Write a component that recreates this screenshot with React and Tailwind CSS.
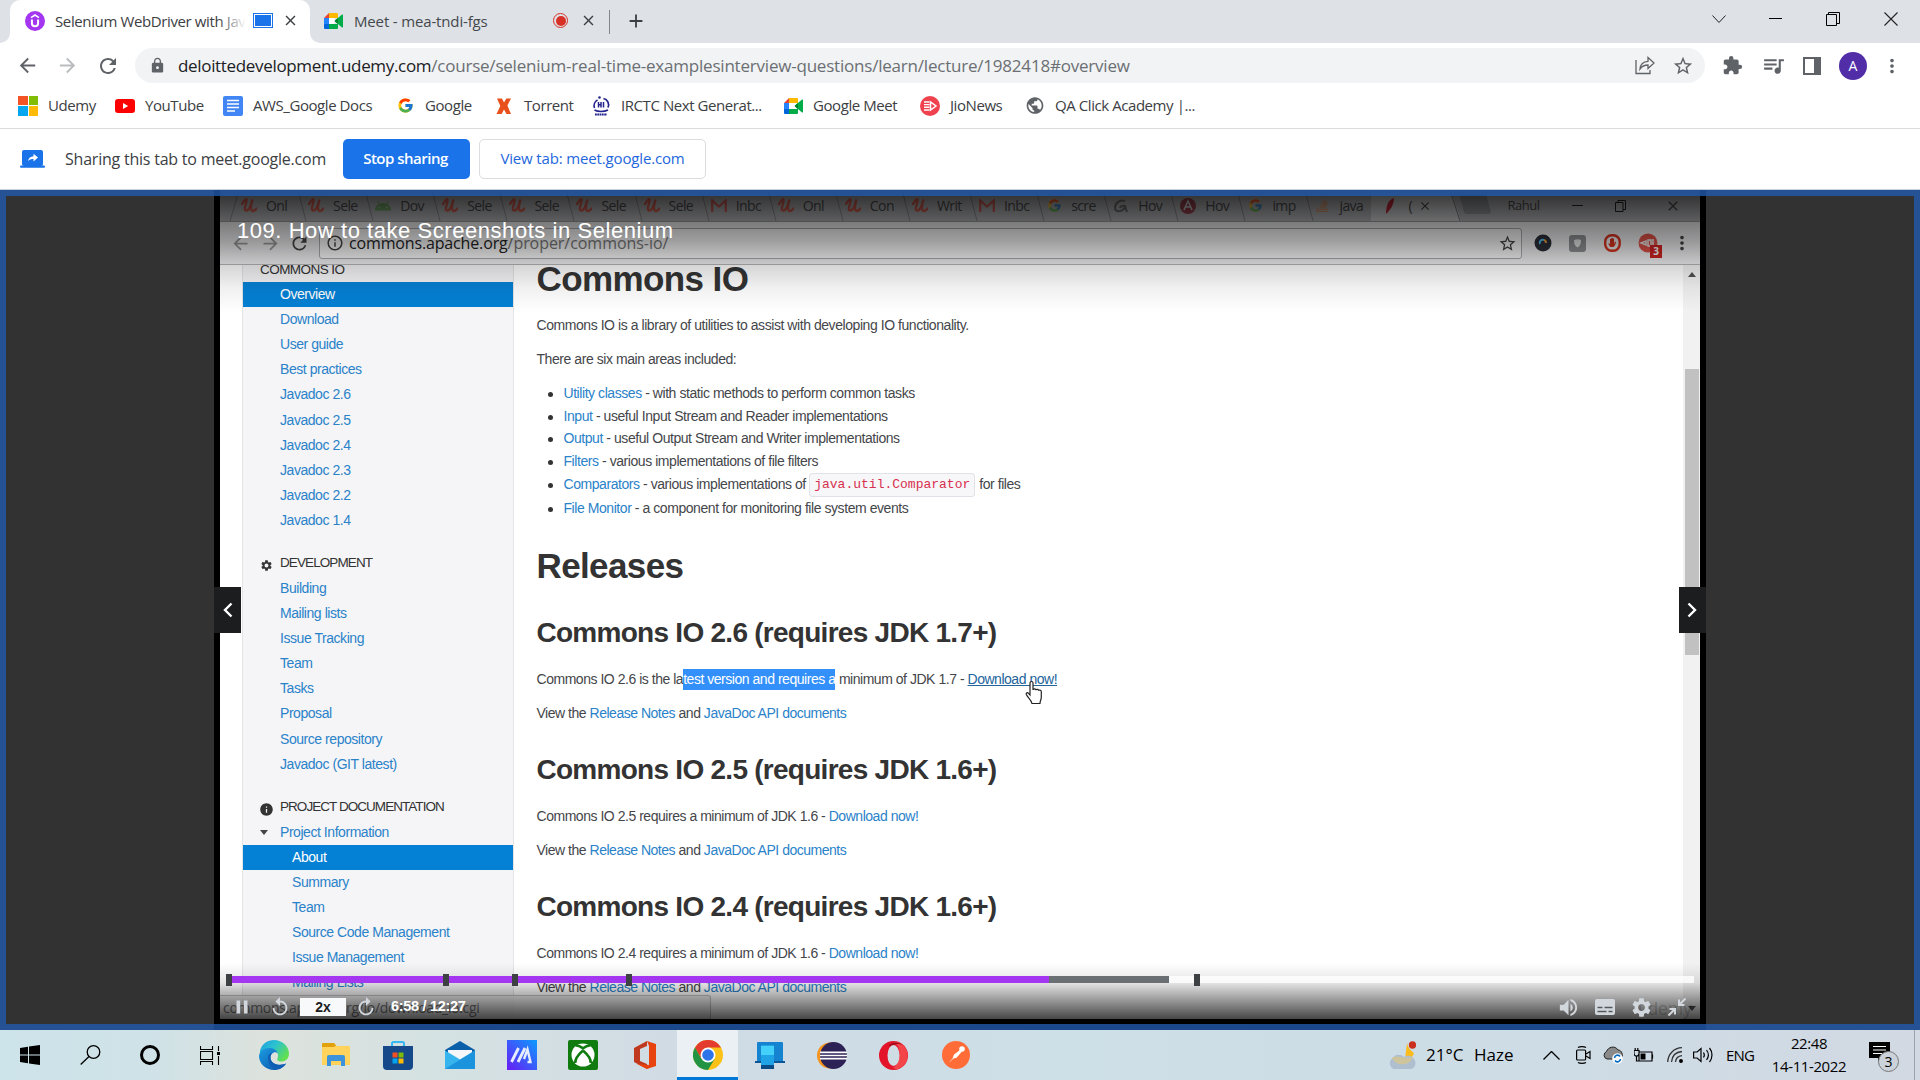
import React from "react";
import {
  MdArrowBack, MdArrowForward, MdRefresh, MdLock, MdStarBorder, MdExtension, MdQueueMusic,
  MdMoreVert, MdAdd, MdClose, MdSettings, MdVolumeUp, MdReplay, MdPause, MdPublic, MdInfo,
  MdInfoOutline, MdAndroid,
} from "react-icons/md";
import { FcGoogle } from "react-icons/fc";
import { FaStackOverflow } from "react-icons/fa";

/* ---------- small brand drawings ---------- */

function UdemyIcon() {
  return (
    <svg width="20" height="20" viewBox="0 0 20 20">
      <circle cx="10" cy="10" r="10" fill="#a435f0" />
      <path d="M6 6.600 10 4l4 2.600" fill="none" stroke="#fff" strokeWidth="1.500" />
      <path d="M6.900 8.400v3.800a3.100 3.100 0 0 0 6.200 0V8.400" fill="none" stroke="#fff" strokeWidth="2" />
    </svg>
  );
}
function MeetIcon() {
  return (
    <svg width="19" height="16" viewBox="0 0 19 16">
      <path d="M5 0h8a1 1 0 0 1 1 1v4H5z" fill="#ffba00" />
      <path d="M5 0v5H0z" fill="#ea4335" />
      <path d="M0 5h5v6H0z" fill="#2684fc" />
      <path d="M0 11h5v5H1a1 1 0 0 1-1-1z" fill="#0066da" />
      <path d="M5 11h9v4a1 1 0 0 1-1 1H5z" fill="#00ac47" />
      <path d="M10.500 8 18 1.600c.4-.3 1-.1 1 .4v12c0 .5-.6.700-1 .4z" fill="#00ac47" />
      <path d="M14 5v6l-3.500-3z" fill="#00832d" />
      <path d="M5 5h5.500v6H5z" fill="#fff" />
    </svg>
  );
}
function MicrosoftIcon() {
  return (
    <div className="grid h-5 w-5 grid-cols-2 gap-px">
      <div className="bg-[#f35325]" />
      <div className="bg-[#81bc06]" />
      <div className="bg-[#05a6f0]" />
      <div className="bg-[#ffba08]" />
    </div>
  );
}
function YouTubeIcon() {
  return (
    <svg width="20" height="14" viewBox="0 0 20 14">
      <rect width="20" height="14" rx="3" fill="#f00" />
      <path d="M8 4v6l5.200-3z" fill="#fff" />
    </svg>
  );
}
function DocsIcon() {
  return (
    <svg width="20" height="20" viewBox="0 0 20 20">
      <rect width="20" height="20" rx="2" fill="#4285f4" />
      <path d="M4 4.500h12M4 8h12M4 11.500h12M4 15h8" stroke="#fff" strokeWidth="1.600" />
    </svg>
  );
}
function TorrentIcon() {
  return (
    <svg width="16" height="16" viewBox="0 0 16 16">
      <path d="M1 .5h5l2 4 2.300-4H15l-3.600 7L15 16h-4.500L8 11.500 5.700 16H.5l3.800-8z" fill="#e8511c" />
    </svg>
  );
}
function IrctcIcon() {
  return (
    <svg width="20" height="20" viewBox="0 0 20 20">
      <path d="M3.500 12A6.500 6.500 0 0 1 6.500 4M12.500 2.500a6.500 6.500 0 0 1 4.500 9M3.500 14c3.500 2 9.500 2 13.500 0" fill="none" stroke="#23238e" strokeWidth="1.700" />
      <path d="M7.500 6v5.500M10 6v5.500M12.500 6v5.500M7.500 8.700H10" stroke="#23238e" strokeWidth="1.500" />
      <path d="M4 18.500h12" stroke="#23238e" strokeWidth="2" strokeDasharray="1.800 .5" />
      <circle cx="8.500" cy="1.500" r="1.300" fill="#23238e" />
    </svg>
  );
}
function JioIcon() {
  return (
    <svg width="20" height="20" viewBox="0 0 20 20">
      <circle cx="10" cy="10" r="10" fill="#f0414f" />
      <path d="M4 6h5.500M4 8.600h5.500M4 11.300h5.500M4 14h5.500" stroke="#fff" strokeWidth="1.400" />
      <path d="M10.500 6v8l5.500-4z" fill="none" stroke="#fff" strokeWidth="1.500" />
    </svg>
  );
}
function ShareTabIcon() {
  return (
    <svg width="25" height="18" viewBox="0 0 25 18">
      <rect x="2" y="0" width="21" height="16" rx="2" fill="#1a73e8" />
      <rect x="0" y="15.500" width="25" height="2.200" rx="1" fill="#1a73e8" />
      <path d="M8 11c.6-3 2.600-4.600 5.500-4.800V3.800L18 7.600l-4.500 3.900V9c-2.300 0-4 .6-5.500 2z" fill="#fff" />
    </svg>
  );
}

/* ---------- browser chrome ---------- */

const UI = "font-['Open_Sans','Noto_Sans',sans-serif]";

function TabStrip() {
  return (
    <div className="flex h-[43px] items-end bg-[#dee1e6]">
      <div className="flex w-[10px] justify-end self-stretch">
        <div className="h-[10px] w-[10px] self-end bg-white"><div className="h-full w-full rounded-br-[10px] bg-[#dee1e6]" /></div>
      </div>
      <div className="flex h-[43px] w-[300px] items-center rounded-t-[10px] bg-white pb-[2px] pl-[15px]">
        <UdemyIcon />
        <div className="relative ml-[10px] w-[191px] overflow-hidden text-[15px] leading-5 tracking-[-0.38px] whitespace-nowrap text-[#3c4043]">
          Selenium WebDriver with Jav
          <div className="absolute inset-y-0 right-0 w-7 bg-linear-to-r from-white/0 to-white" />
        </div>
        <div className="ml-[7px] h-[15px] w-5 border border-[#1a73e8] p-px"><div className="h-full w-full bg-[#1a73e8]" /></div>
        <MdClose className="ml-[9px] text-[17px] text-[#3c4043]" />
      </div>
      <div className="h-[10px] w-[10px] bg-white"><div className="h-full w-full rounded-bl-[10px] bg-[#dee1e6]" /></div>
      <div className="flex h-[43px] w-[289px] items-center pb-[2px] pl-[4px]">
        <MeetIcon />
        <div className="ml-[11px] w-[199px] text-[15px] leading-5 tracking-[-0.15px] text-[#45494d]">Meet - mea-tndi-fgs</div>
        <div className="flex h-[15px] w-[15px] items-center justify-center rounded-full border border-[#d93025]"><div className="h-[10px] w-[10px] rounded-full bg-[#d93025]" /></div>
        <MdClose className="ml-[12px] text-[17px] text-[#3c4043]" />
      </div>
      <div className="mb-[9px] h-6 w-px bg-[#80868b]" />
      <MdAdd className="mb-[11px] ml-[15px] text-[22px] text-[#3c4043]" />
      <div className="ml-auto flex h-[37px] items-center self-start text-black">
        <svg className="mr-[43px]" width="14" height="8" viewBox="0 0 14 8"><path d="M.5.5 7 7.500l6.500-7" fill="none" stroke="#222" /></svg>
        <div className="mr-[44px] h-px w-[13px] bg-black" />
        <svg className="mr-[44px]" width="14" height="14" viewBox="0 0 14 14"><path d="M.5 2.500h10v11H.5zM2.500 2.500v-2h11v11h-3" fill="none" stroke="#000" /></svg>
        <svg className="mr-[22px]" width="14" height="14" viewBox="0 0 14 14"><path d="m.5.5 13 13m0-13-13 13" stroke="#222" strokeWidth="1.100" /></svg>
      </div>
    </div>
  );
}

function Toolbar() {
  return (
    <div className="flex h-[45px] items-center bg-white text-[#5f6368]">
      <div className="flex w-[135px] pl-[16px]">
        <MdArrowBack className="mr-[17px] text-[23px]" />
        <MdArrowForward className="mr-[17px] text-[23px] text-[#b9bcbf]" />
        <MdRefresh className="text-[24px]" />
      </div>
      <div className="flex h-[35px] w-[1570px] items-center rounded-full bg-[#f1f3f4]">
        <MdLock className="ml-[14px] text-[17px]" />
        <div className="ml-[12px] text-[17px] whitespace-nowrap">
          <span className="tracking-[-0.33px] text-[#202124]">deloittedevelopment.udemy.com</span>
          <span className="tracking-[-0.21px] text-[#6b6f73]">/course/selenium-real-time-examplesinterview-questions/learn/lecture/1982418#overview</span>
        </div>
        <svg className="mr-[17px] ml-auto" width="20" height="19" viewBox="0 0 20 19" fill="none" stroke="#5f6368" strokeWidth="1.300">
          <path d="M1 4v13.500h14V14" />
          <path d="M5 13c.5-5 3-7.500 8-7.700V1.500l6 5.500-6 5.500V9c-3.500 0-6 1.200-8 4z" />
        </svg>
        <MdStarBorder className="mr-[11px] text-[22px]" />
      </div>
      <MdExtension className="ml-[17px] text-[21px]" />
      <MdQueueMusic className="ml-[18px] text-[25px]" />
      <div className="ml-[17px] h-[18px] w-[18px] border-2 border-r-[7px] border-[#5f6368]" />
      <div className="ml-[18px] flex h-7 w-7 items-center justify-center rounded-full bg-[#512da8] text-[14px] text-white">A</div>
      <MdMoreVert className="ml-[14px] text-[22px]" />
    </div>
  );
}

function Bookmark({ width, icon, label }) {
  return (
    <div className={`flex items-center ${width}`}>
      <div className="flex w-5 justify-center">{icon}</div>
      <span className="ml-[10px] whitespace-nowrap">{label}</span>
    </div>
  );
}

function Bookmarks() {
  return (
    <div className="flex h-[41px] items-center border-b border-[#d9dbdd] bg-white pb-[5px] pl-[18px] text-[15px] tracking-[-0.43px] text-[#3c4043]">
      <Bookmark width="w-[97px]" icon={<MicrosoftIcon />} label="Udemy" />
      <Bookmark width="w-[108px]" icon={<YouTubeIcon />} label="YouTube" />
      <Bookmark width="w-[172px]" icon={<DocsIcon />} label="AWS_Google Docs" />
      <Bookmark width="w-[99px]" icon={<FcGoogle className="text-[17px]" />} label="Google" />
      <Bookmark width="w-[97px]" icon={<TorrentIcon />} label="Torrent" />
      <Bookmark width="w-[192px]" icon={<IrctcIcon />} label="IRCTC Next Generat..." />
      <Bookmark width="w-[137px]" icon={<MeetIcon />} label="Google Meet" />
      <Bookmark width="w-[105px]" icon={<JioIcon />} label="JioNews" />
      <Bookmark width="w-[180px]" icon={<MdPublic className="text-[21px] text-[#5f6368]" />} label="QA Click Academy |..." />
    </div>
  );
}

function SharingBar() {
  return (
    <div className="flex h-[61px] items-center border-b border-[#c9d2dc] bg-white pl-[20px] text-[#3c4043]">
      <ShareTabIcon />
      <span className="ml-[20px] w-[278px] text-[16px] tracking-[-0.22px] whitespace-nowrap">Sharing this tab to meet.google.com</span>
      <div className="flex h-10 w-[127px] items-center justify-center rounded-[5px] bg-[#1a73e8] pr-[2px] pb-[2px] text-[15px] font-semibold tracking-[-0.5px] text-white">Stop sharing</div>
      <div className="ml-[9px] flex h-10 w-[227px] items-center justify-center rounded-[5px] border border-[#dadce0] pb-[2px] text-[15px] font-medium tracking-[-0.15px] text-[#2467dc]">View tab: meet.google.com</div>
    </div>
  );
}

/* ---------- browser recorded inside the video ---------- */

function UMark() {
  return (
    <svg width="16" height="15" viewBox="0 0 16 15">
      <path d="M1 6C4 1 6 0 5.500 3 5 7 2 12.500 5.500 12.500 9 12.500 10 6 11.500 1.500 9.500 8 9.500 13 12 13c1.500 0 2.500-1 3.500-2.500" fill="none" stroke="#e0402c" strokeWidth="2.300" strokeLinecap="round" />
    </svg>
  );
}
function GmailMark() {
  return <svg width="16" height="13" viewBox="0 0 16 13"><path d="M1.200 13V1.500L8 7.500l6.800-6V13" fill="none" stroke="#d93f35" strokeWidth="2.200" /></svg>;
}
const google = <FcGoogle className="text-[15px]" />;
const innerTabs = [
  [<UMark />, "Onl"], [<UMark />, "Sele"], [<MdAndroid className="text-[18px] text-[#57a145]" />, "Dov"], [<UMark />, "Sele"],
  [<UMark />, "Sele"], [<UMark />, "Sele"], [<UMark />, "Sele"], [<GmailMark />, "Inbc"], [<UMark />, "Onl"],
  [<UMark />, "Con"], [<UMark />, "Writ"], [<GmailMark />, "Inbc"], [google, "scre"],
  [<svg width="16" height="14" viewBox="0 0 16 14"><path d="M12 2C7 0 2 4 2 9c0 5 9 4 10-2-4-1-5 2-5 2m5-2 2 6" fill="none" stroke="#555" strokeWidth="2" /></svg>, "Hov"],
  [<svg width="16" height="16" viewBox="0 0 16 16"><circle cx="8" cy="8" r="8" fill="#8e1b2c" /><path d="m4 12 4-9 4 9M5.500 9h5" fill="none" stroke="#ddd" strokeWidth="1.600" /></svg>, "Hov"],
  [google, "imp"], [<FaStackOverflow className="text-[15px] text-[#e8833a]" />, "java"],
];

function InnerTabs() {
  return (
    <div className="flex h-[32px] items-center border-b border-[#9c9c9e] bg-[#b4b5b8] pl-[10px] text-[14px] text-[#4a4a4c]">
      {innerTabs.map(([icon, label], i) => (
        <div key={i} className="flex h-full w-[67.1px] shrink-0 items-center">
          <svg className="-mr-[2px] shrink-0" width="10" height="31" viewBox="0 0 10 31">
            <path d={i === 0 ? "M9 0 0 31" : "M1 0 9 31"} stroke="#8a8a8e" fill="none" />
          </svg>
          <div className="flex w-[22px] shrink-0 justify-center opacity-75">{icon}</div>
          <div className="ml-[6px] w-[29px] shrink-0 tracking-[-0.6px] whitespace-nowrap">{label}</div>
        </div>
      ))}
      <div className="flex h-full w-[76px] shrink-0 items-center bg-[#cfd0d2]">
        <svg className="ml-[13px]" width="11" height="18" viewBox="0 0 11 18"><path d="M2 17C2 9 4 3 10 1 10 8 6 13 2 17z" fill="#c5283d" /></svg>
        <span className="ml-[14px]">(</span>
        <MdClose className="ml-[5px] text-[14px]" />
      </div>
      <svg width="50" height="31" viewBox="0 0 50 31"><path d="M0 0h4l10 31H0z" fill="#cfd0d2" /><path d="m3 0 10 31" stroke="#7c7c80" /><path d="M12 4h27l5 18a3 3 0 0 1-3 2H20a3 3 0 0 1-3-2z" fill="#96979a" /></svg>
      <span className="ml-[11px] w-[64px] text-[13px] tracking-[-0.5px]">Rahul</span>
      <div className="w-[43px]"><div className="h-[1.5px] w-[11px] bg-[#222]" /></div>
      <svg className="mr-[39px]" width="11" height="12" viewBox="0 0 11 12"><path d="M.5 2.500h7.500v9H.5zM3 2.500v-2h7.500v9H8" fill="none" stroke="#222" /></svg>
      <MdClose className="text-[16px]" />
    </div>
  );
}

function InnerToolbar() {
  return (
    <div className="flex h-[43px] items-center border-b border-[#b4b4b4] bg-[#eeeef0] text-[#444]">
      <MdArrowBack className="ml-[10px] text-[21px] text-[#999]" />
      <MdArrowForward className="ml-[9px] text-[21px] text-[#999]" />
      <MdRefresh className="ml-[8px] text-[21px]" />
      <div className="ml-[9px] flex h-[31px] w-[1203px] items-center rounded-[3px] border border-[#a9a9ab] bg-[#f8f8f9]">
        <MdInfoOutline className="ml-[6px] text-[18px]" />
        <span className="ml-[5px] text-[16px] tracking-[-0.9px] text-[#222]"><span className="tracking-[-0.15px]">commons.apache.org</span><span className="tracking-[-0.05px] text-[#777]">/proper/commons-io/</span></span>
        <MdStarBorder className="mr-[4px] ml-auto text-[19px]" />
      </div>
      <svg className="ml-[12px]" width="18" height="18" viewBox="0 0 18 18"><circle cx="9" cy="9" r="8.500" fill="#2c2f3a" /><path d="M6 10a3 3 0 0 1 4-4" stroke="#4fc3f7" strokeWidth="2" fill="none" /><path d="M10 6a3 3 0 0 1 2 3" stroke="#ef9a3c" strokeWidth="2" fill="none" /></svg>
      <svg className="ml-[17px]" width="17" height="17" viewBox="0 0 17 17"><rect width="17" height="17" rx="3" fill="#8f9092" /><path d="M5 5c3-1 5-1 7 0 0 4-1 6-3.500 7.500C6 11 5 9 5 5z" fill="#e8e8e8" /></svg>
      <svg className="ml-[18px]" width="17" height="18" viewBox="0 0 17 18"><rect x="1.200" y="1.200" width="14.500" height="15.500" rx="6.500" fill="#eee" stroke="#d8321f" strokeWidth="2.400" /><path d="M6.500 13c-2-2-2-3-2-4l1.500 1V5h1.200v4V4h1.300v5V4.500H10V10l1-2.500 1 .5c-.5 2-1 4-2.500 5z" fill="#d8321f" /></svg>
      <div className="relative ml-[17px]">
        <svg width="20" height="20" viewBox="0 0 20 20"><circle cx="10" cy="10" r="9.500" fill="#df5147" /><path d="m3 10 5-2v4zm7-3h3v6h-3zm5-1v8" stroke="#eee" strokeWidth="1.500" fill="none" /></svg>
        <div className="absolute top-[12px] left-[12px] flex h-[13px] w-[12px] items-center justify-center bg-[#cf2222] text-[10px] font-bold text-white">3</div>
      </div>
      <MdMoreVert className="ml-[13px] text-[22px]" />
    </div>
  );
}

function SideRow({ children }) {
  return <div className="flex h-[25.1px] items-center pl-[37px]">{children}</div>;
}
function SubRow({ children }) {
  return <div className="flex h-[25.1px] items-center pl-[49px]">{children}</div>;
}

function SideNav() {
  return (
    <div className="ml-[22px] h-full w-[272px] shrink-0 border-x border-[#e4e4e6] bg-[#f5f5f7] text-[14px] tracking-[-0.45px] whitespace-nowrap text-[#2a82c9]">
      <div className="flex h-[17px] items-center pb-[7px] pl-[17px] text-[13.5px] font-medium tracking-[-0.55px] text-[#333]">COMMONS IO</div>
      <div className="bg-[#0480d4] text-white"><SideRow>Overview</SideRow></div>
      <SideRow>Download</SideRow>
      <SideRow>User guide</SideRow>
      <SideRow>Best practices</SideRow>
      <SideRow>Javadoc 2.6</SideRow>
      <SideRow>Javadoc 2.5</SideRow>
      <SideRow>Javadoc 2.4</SideRow>
      <SideRow>Javadoc 2.3</SideRow>
      <SideRow>Javadoc 2.2</SideRow>
      <SideRow>Javadoc 1.4</SideRow>
      <div className="mt-[18px] flex h-[25px] items-center pl-[17px] text-[13.5px] tracking-[-0.9px] text-[#333]">
        <MdSettings className="mt-[4px] mr-[7px] text-[13px]" />DEVELOPMENT
      </div>
      <SideRow>Building</SideRow>
      <SideRow>Mailing lists</SideRow>
      <SideRow>Issue Tracking</SideRow>
      <SideRow>Team</SideRow>
      <SideRow>Tasks</SideRow>
      <SideRow>Proposal</SideRow>
      <SideRow>Source repository</SideRow>
      <SideRow>Javadoc (GIT latest)</SideRow>
      <div className="mt-[18px] flex h-[25px] items-center pl-[16px] text-[13.5px] tracking-[-0.95px] text-[#333]">
        <MdInfo className="mt-[4px] mr-[6px] text-[15px]" />PROJECT DOCUMENTATION
      </div>
      <div className="flex h-[25.1px] items-center pl-[17px]">
        <div className="mr-[12px] h-0 w-0 border-x-[4px] border-t-[5px] border-x-transparent border-t-[#444]" />Project Information
      </div>
      <div className="bg-[#0480d4] text-white"><SubRow>About</SubRow></div>
      <SubRow>Summary</SubRow>
      <SubRow>Team</SubRow>
      <SubRow>Source Code Management</SubRow>
      <SubRow>Issue Management</SubRow>
      <SubRow>Mailing Lists</SubRow>
    </div>
  );
}

function Link({ children }) {
  return <span className="text-[#2a82c9]">{children}</span>;
}
function Item({ link, children }) {
  return (
    <div className="flex h-[22.8px] items-center whitespace-pre">
      <div className="mt-[2px] mr-[10.5px] ml-[11.5px] h-[5px] w-[5px] rounded-full bg-[#333]" />
      <Link>{link}</Link>{children}
    </div>
  );
}
function Release({ version, children }) {
  return (
    <div className="mb-[26.6px]">
      <div className="flex h-[34px] items-center text-[28px] font-bold tracking-[-0.73px] text-[#333]">{version}</div>
      <div className="mt-4 flex h-[26px] items-center tracking-[-0.47px] whitespace-pre">{children}</div>
      <div className="mt-[8.3px] flex h-[26px] items-center tracking-[-0.48px] whitespace-pre">
        View the <Link>Release Notes</Link> and <Link>JavaDoc API documents</Link>
      </div>
    </div>
  );
}

function Article() {
  return (
    <div className="flex-1 overflow-hidden pl-[22.5px] text-[14px] tracking-[-0.44px] text-[#44464a]">
      <div className="flex h-[29px] items-center text-[35px] font-bold tracking-[-0.6px] text-[#333]">Commons IO</div>
      <div className="mt-[18px] flex h-[26px] items-center">Commons IO is a library of utilities to assist with developing IO functionality.</div>
      <div className="mt-[8px] flex h-[26px] items-center">There are six main areas included:</div>
      <div className="mt-[10px] mb-[26px]">
        <Item link="Utility classes"> - with static methods to perform common tasks</Item>
        <Item link="Input"> - useful Input Stream and Reader implementations</Item>
        <Item link="Output"> - useful Output Stream and Writer implementations</Item>
        <Item link="Filters"> - various implementations of file filters</Item>
        <Item link="Comparators">
          {" - various implementations of "}
          <span className="mr-[4px] flex h-[24px] w-[166px] items-center justify-center rounded-[3px] border border-[#e1e1e8] bg-[#f7f7f9] font-['Liberation_Mono',monospace] text-[13px] tracking-[0px] text-[#d8304f]">java.util.Comparator</span>
          for files
        </Item>
        <div className="pt-[1px]"><Item link="File Monitor"> - a component for monitoring file system events</Item></div>
      </div>
      <div className="mb-[30.5px] flex h-[40px] items-center text-[35px] font-bold tracking-[-0.62px] text-[#333]">Releases</div>
      <Release version="Commons IO 2.6 (requires JDK 1.7+)">
        Commons IO 2.6 is the la<span className="bg-[#3390fa] text-white">test version and requires a</span> minimum of JDK 1.7 -{" "}
        <span className="relative text-[#22649b] underline">
          Download now!
          <svg className="absolute top-[11px] left-[57px]" width="18" height="25" viewBox="0 0 18 25">
            <path d="M5 15V3c0-2 3-2 3 0v7c0-1.500 3-1.500 3 .3 0-1.300 2.700-1.200 2.700.5 0-1.200 2.600-1 2.600.7V17c0 3-1.300 3.500-1.300 6.500H7C6.500 20 3 18 1.300 14.500.7 13 2.500 12 3.500 13.300z" fill="#fff" stroke="#222" strokeWidth="1.200" />
          </svg>
        </span>
      </Release>
      <Release version="Commons IO 2.5 (requires JDK 1.6+)">Commons IO 2.5 requires a minimum of JDK 1.6 - <Link>Download now!</Link></Release>
      <Release version="Commons IO 2.4 (requires JDK 1.6+)">Commons IO 2.4 requires a minimum of JDK 1.6 - <Link>Download now!</Link></Release>
    </div>
  );
}

/* ---------- video player ---------- */

function Marker({ at }) {
  return <div className={`absolute -top-[2px] h-[12px] w-[6px] bg-[#3e4143] ${at}`} />;
}

function PlayerControls() {
  return (
    <div className="absolute inset-x-0 bottom-0 font-['Liberation_Sans',sans-serif]">
      <div className="relative mr-[6px] ml-[8px] flex h-[7px] bg-white/80">
        <div className="w-[821px] bg-[#a435f0]" />
        <div className="w-[120px] bg-[#6a6f73]" />
        <Marker at="-left-[2px]" />
        <Marker at="left-[215px]" />
        <Marker at="left-[284px]" />
        <Marker at="left-[398px]" />
        <Marker at="left-[966px]" />
      </div>
      <div className="flex h-[36px] items-center pt-[12px] text-[#d1d7dc]">
        <MdPause className="ml-[11px] text-[22px]" />
        <MdReplay className="ml-[16px] text-[22px]" />
        <div className="ml-[9px] flex h-[18px] w-[46px] items-center justify-center bg-[#f7f9fa] text-[14px] font-bold text-[#1c1d1f]">2x</div>
        <MdReplay className="ml-[9px] -scale-x-100 text-[22px]" />
        <span className="ml-[14px] text-[14.5px] font-bold tracking-[-0.3px] text-white">6:58 / 12:27</span>
        <MdVolumeUp className="mr-[15px] ml-auto text-[23px]" />
        <svg className="mr-[15px]" width="20" height="16" viewBox="0 0 20 16">
          <rect width="20" height="16" rx="2" fill="#d1d7dc" />
          <path d="M2.500 8.500h5m2 0h8m-15 4h9m2 0h4" stroke="#55585b" strokeWidth="1.500" />
        </svg>
        <MdSettings className="mr-[15px] text-[23px]" />
        <svg className="mr-[14px]" width="18" height="18" viewBox="0 0 18 18" fill="none" stroke="#d1d7dc" strokeWidth="2">
          <path d="M17.500.5 11 7m0-5.500V7h5.500M.5 17.500 7 11m-5.500 0H7v5.500" />
        </svg>
      </div>
    </div>
  );
}

function Player() {
  return (
    <div className="relative flex h-[840px] justify-center bg-[#323232]">
      <div className="relative h-full w-[1492px] bg-black pr-[6px] pl-[6px]">
        <div className="relative flex h-[829px] flex-col overflow-hidden bg-white font-['Liberation_Sans',sans-serif]">
          <div className={`shrink-0 ${UI}`}>
            <InnerTabs />
            <InnerToolbar />
          </div>
          <div className="flex min-h-0 flex-1">
            <SideNav />
            <Article />
            <div className="flex w-[17px] flex-col items-center bg-[#f1f1f1]">
              <div className="mt-[7px] border-x-[4px] border-b-[5px] border-x-transparent border-b-[#505050]" />
              <div className="mt-[92px] h-[286px] w-[14px] bg-[#c1c1c1]" />
              <div className="mt-auto mb-[8px] border-x-[4px] border-t-[5px] border-x-transparent border-t-[#505050]" />
            </div>
          </div>
          <div className={`absolute bottom-0 left-0 flex h-[24px] w-[491px] items-center rounded-tr-[3px] border-t border-r border-[#c4c4c4] bg-[#f1f1f1]/80 pl-[3px] text-[14px] tracking-[-0.3px] whitespace-pre text-[#777] ${UI}`}>commons.apache.org/io/download_io.cgi</div>
          <div className="absolute right-[8px] bottom-0 text-[18px] leading-5 text-black/20">ûdemy</div>
          <div className="absolute inset-x-0 top-0 h-[122px] bg-[linear-gradient(to_bottom,rgba(0,0,0,0.76),rgba(0,0,0,0.5)_24%,rgba(0,0,0,0.36)_42%,rgba(0,0,0,0.18)_59%,rgba(0,0,0,0.06)_80%,transparent)]" />
          <div className="absolute inset-x-0 bottom-0 h-[56px] bg-[linear-gradient(to_bottom,transparent,rgba(0,0,0,0.1)_35%,rgba(0,0,0,0.72))]" />
          <h1 className="absolute top-[27px] left-[17px] text-[22px] leading-7 tracking-[0.55px] text-white">109. How to take Screenshots in Selenium</h1>
          <PlayerControls />
        </div>
        <button className="absolute top-[397px] left-0 flex h-[46px] w-[27px] items-center justify-center bg-[#1c1d1f]">
          <svg width="11" height="16" viewBox="0 0 11 16"><path d="M9.500 1.500 3 8l6.500 6.500" fill="none" stroke="#fff" strokeWidth="2.400" /></svg>
        </button>
        <button className="absolute top-[397px] right-0 flex h-[46px] w-[27px] items-center justify-center bg-[#1c1d1f]">
          <svg width="11" height="16" viewBox="0 0 11 16"><path d="M1.500 1.500 8 8l-6.500 6.500" fill="none" stroke="#fff" strokeWidth="2.400" /></svg>
        </button>
      </div>
      <div className="absolute inset-0 border-[6px] border-[#225aac]/80" />
    </div>
  );
}

/* ---------- Windows taskbar ---------- */

const appIcons = {
  edge: (
    <svg width="30" height="30" viewBox="0 0 30 30">
      <defs>
        <linearGradient id="edgeTop" x1="0" y1="0" x2="1" y2=".6"><stop stopColor="#1b9de2" /><stop offset=".5" stopColor="#2cc3cf" /><stop offset="1" stopColor="#62e04f" /></linearGradient>
        <linearGradient id="edgeLow" x1="0" y1="0" x2="1" y2="1"><stop stopColor="#1b9de2" /><stop offset="1" stopColor="#0a4fa6" /></linearGradient>
      </defs>
      <path d="M1 10.500C3 4 8.500 0 15 0c8.500 0 15 6.500 15 13.500 0 5-3.500 8-7.500 8-3.500 0-5-1.500-4-3.300C20.500 14 17 9 11.500 9 7 9 3 10 1 14z" fill="url(#edgeTop)" />
      <path d="M0 16C.5 11 5 8 10.500 8c4 0 7 2 8.500 5-4-2-8 1-7.500 5.500.5 5 7 8.500 15.500 5C24 28 20 30 15 30 6.500 30 0 23.500 0 16z" fill="url(#edgeLow)" />
      <path d="M9 17c-.5 6 3.500 11 8.500 12.500 4-.6 7.500-2.800 9.800-6C20 26.500 12 24 11.500 18c-.2-2 .5-4 2.200-5.200C11 13 9.200 14.500 9 17z" fill="#0f5eb5" />
    </svg>
  ),
  explorer: (
    <svg width="28" height="24" viewBox="0 0 28 24">
      <path d="M1 0h11l3 3h12a1 1 0 0 1 1 1v18H0V1a1 1 0 0 1 1-1z" fill="#ffd35c" />
      <path d="M1 0h11l2 2.500L12 4H0V1a1 1 0 0 1 1-1z" fill="#e0a10c" />
      <path d="M5 23v-9a2 2 0 0 1 2-2h14a2 2 0 0 1 2 2v9h-4v-5H9v5z" fill="#3d92dc" />
    </svg>
  ),
  store: (
    <svg width="30" height="29" viewBox="0 0 30 29">
      <path d="M9 6V2.500A1.500 1.500 0 0 1 10.500 1h9A1.500 1.500 0 0 1 21 2.500V6" fill="none" stroke="#35b8f1" strokeWidth="2" />
      <path d="M0 5h30v20a4 4 0 0 1-4 4H4a4 4 0 0 1-4-4z" fill="#15498a" />
      <path d="M9.500 11.500h5v5h-5z" fill="#f25022" /><path d="M15.500 11.500h5v5h-5z" fill="#7fba00" />
      <path d="M9.500 17.500h5v5h-5z" fill="#00a4ef" /><path d="M15.500 17.500h5v5h-5z" fill="#ffb900" />
    </svg>
  ),
  mail: (
    <svg width="30" height="28" viewBox="0 0 30 28">
      <path d="M15 0 30 9v19H0V9z" fill="#0b5ea8" />
      <path d="M3 9h24v10H3z" fill="#f4f6f8" />
      <path d="m0 9.500 15 9 15-9V28H0z" fill="#35b4ee" /><path d="m0 28 30-18.500V28z" fill="#1c94dd" />
    </svg>
  ),
  asus: (
    <svg width="30" height="30" viewBox="0 0 30 30">
      <defs><linearGradient id="asus" x1="0" y1="1" x2="1" y2="0"><stop stopColor="#6a1bf5" /><stop offset="1" stopColor="#0b9bff" /></linearGradient></defs>
      <rect width="30" height="30" fill="url(#asus)" />
      <path d="m4.500 22 7-14M11 22l7-14" fill="none" stroke="#e8ecff" strokeWidth="2.800" />
      <path d="m17 19 3.500-9.500L23.500 22h-3" fill="none" stroke="#e8ecff" strokeWidth="2.400" />
    </svg>
  ),
  xbox: (
    <svg width="30" height="30" viewBox="0 0 30 30">
      <rect width="30" height="30" rx="2" fill="#107c10" />
      <circle cx="15" cy="15" r="11.500" fill="#fff" />
      <path d="M7.500 5.500C11 5 14 7.500 15 8.300 16 7.500 19 5 22.500 5.500M15 10.500c-4 3.500-8 9-7.800 12.500M15 10.500c4 3.500 8 9 7.800 12.500" fill="none" stroke="#107c10" strokeWidth="2.600" />
    </svg>
  ),
  office: (
    <svg width="24" height="28" viewBox="0 0 24 28">
      <path d="M1 7 14 0v5L7 8v12l7 3v5L1 21z" fill="#c0391f" />
      <path d="m14 0 9 3v22l-9 3-10-5 12 1V5z" fill="#e8420f" />
    </svg>
  ),
  chrome: (
    <svg width="30" height="30" viewBox="0 0 30 30">
      <circle cx="15" cy="15" r="15" fill="#fbc116" />
      <path d="M2 7.500A15 15 0 0 1 28 7.500H15v7.500L8.500 19z" fill="#e33b2e" />
      <path d="M8.500 19 2 7.500A15 15 0 0 0 15 30l6.500-11z" fill="#229342" />
      <circle cx="15" cy="15" r="7.500" fill="#fff" /><circle cx="15" cy="15" r="5.800" fill="#2d74eb" />
    </svg>
  ),
  phone: (
    <svg width="30" height="27" viewBox="0 0 30 27">
      <rect x="2" width="26" height="20" rx="1" fill="#1583d0" /><path d="M0 19h30v2H0z" fill="#0b5696" />
      <rect x="6" y="3" width="13" height="24" rx="1" fill="#1fa3e6" /><path d="M6 4h13v9H6z" fill="#43d0fa" /><path d="M6 23h13v4H6z" fill="#0c4a86" />
    </svg>
  ),
  eclipse: (
    <svg width="30" height="27" viewBox="0 0 30 27">
      <circle cx="13" cy="13.500" r="13" fill="#f7941e" /><circle cx="16.500" cy="13.500" r="13.500" fill="#2c2255" />
      <path d="M3 10.300h27M3 13.500h27M3 16.700h27" stroke="#fff" strokeWidth="1.700" />
    </svg>
  ),
  opera: (
    <svg width="29" height="29" viewBox="0 0 29 29">
      <ellipse cx="14.500" cy="14.500" rx="14.500" ry="14.500" fill="#e3142a" />
      <path d="M13 2.500C24 0 22 27 13 26.500l5 2a14.500 14.500 0 0 0 0-28z" fill="#f4454b" />
      <path d="M9.500 5C12 1 20 0 24 4.500 20 2 15 3 12 5z" fill="#9f0a18" />
      <ellipse cx="14.500" cy="14.500" rx="6" ry="10.500" fill="#d0dce4" />
    </svg>
  ),
  postman: (
    <svg width="28" height="28" viewBox="0 0 28 28">
      <circle cx="14" cy="14" r="14" fill="#ff6c37" />
      <path d="m6.500 22 4-4.500 1.500-4 6-4.500 1.800 1.800-5.300 6-3 .7z" fill="#fff" /><circle cx="20" cy="8" r="2.800" fill="#fff" />
    </svg>
  ),
};

function TaskApp({ icon }) {
  return <div className="flex h-full w-[61.9px] items-center justify-center">{icon}</div>;
}

function Taskbar() {
  return (
    <div className="flex h-[50px] items-center bg-[linear-gradient(to_right,#cde4ea,#cfe2e7_8%,#dde2dc_14%,#d5e2e2_22%,#d0dbe4_36%,#cddfe7_55%,#cddce5_80%,#d2d9e3)] text-black">
      <div className="flex w-[60px] justify-center">
        <svg width="20" height="20" viewBox="0 0 20 20"><path d="m0 3 8-1.200v7.700H0zM9 1.600 20 0v9.500H9zM0 10.500h8v7.700L0 17zM9 10.500h11V20L9 18.400z" /></svg>
      </div>
      <div className="flex w-[60px] justify-center">
        <svg width="21" height="20" viewBox="0 0 21 20" fill="none" stroke="#000" strokeWidth="1.300"><circle cx="13.500" cy="7" r="6.300" /><path d="M9 11.500.7 19.500" /></svg>
      </div>
      <div className="flex w-[60px] justify-center"><div className="h-5 w-5 rounded-full border-[3px] border-black" /></div>
      <div className="mr-[3px] flex w-[60px] justify-center">
        <svg width="20" height="19" viewBox="0 0 20 19" fill="none" stroke="#000" strokeWidth="1.100"><path d="M.5 0v3.500h12V0M.5 5.500h12v8H.5zM.5 19v-3.500h12V19M18.500 0v5M18.500 10v9" /><path d="M17 6h3v3h-3z" fill="#000" stroke="none" /></svg>
      </div>
      <TaskApp icon={appIcons.edge} />
      <TaskApp icon={appIcons.explorer} />
      <TaskApp icon={appIcons.store} />
      <TaskApp icon={appIcons.mail} />
      <TaskApp icon={appIcons.asus} />
      <TaskApp icon={appIcons.xbox} />
      <TaskApp icon={appIcons.office} />
      <div className="mx-px flex h-full w-[61px] items-center justify-center border-b-[3px] border-[#0078d7] bg-[#ebf0f4] pt-[3px]">{appIcons.chrome}</div>
      <TaskApp icon={appIcons.phone} />
      <TaskApp icon={appIcons.eclipse} />
      <TaskApp icon={appIcons.opera} />
      <TaskApp icon={appIcons.postman} />
      <div className="ml-auto flex h-full items-center">
        <svg className="mr-[10px]" width="28" height="28" viewBox="0 0 28 28">
          <path d="M19 2c1 6 5 8 7 10-2 6-6 6-9 6z" fill="#fbbc1c" /><circle cx="24.500" cy="4" r="3.700" fill="#c9301f" />
          <path d="M6 28a6 6 0 0 1-1-11c2-4 8-4 11-1 3-2 8-2 10 2 3 4 1 10-4 10z" fill="#b0bfd0" />
          <path d="M4 17c4-3 12 1 21-1-2 8-16 11-21 1z" fill="#cfc59c" />
        </svg>
        <span className="w-[48px] text-[17px]">21°C</span>
        <span className="w-[69px] text-[17px]">Haze</span>
        <svg className="mr-[16px]" width="17" height="9" viewBox="0 0 17 9"><path d="m.5 8.500 8-8 8 8" fill="none" stroke="#000" strokeWidth="1.300" /></svg>
        <svg className="mr-[12px]" width="15" height="18" viewBox="0 0 15 18" fill="none" stroke="#000" strokeWidth="1.200"><rect x=".6" y="4" width="9" height="10" rx="1" /><path d="M10 8l4-2.500v7L10 10M2 1.500c2-1.200 6-1.200 8 0M2 16.500c2 1.200 6 1.200 8 0" /></svg>
        <svg className="mr-[10px]" width="21" height="18" viewBox="0 0 21 18">
          <path d="M4 13a4 4 0 0 1-.5-7.500C5 1 12-1 15 4c4 0 6 6 2.500 9z" fill="#8a8a8a" stroke="#222" />
          <circle cx="14.500" cy="12.500" r="5.300" fill="#fff" /><path d="M11.500 12a3 3 0 0 1 5.500-1.500M17.500 13a3 3 0 0 1-5.500 1.500" fill="none" stroke="#0067c0" strokeWidth="1.600" />
        </svg>
        <svg className="mr-[13px]" width="20" height="15" viewBox="0 0 20 15"><path d="M5 4h13v9H5zM18.500 6.500v4M0 2.500h5v3a2.500 2.500 0 0 1-5 0zM1.200 0v3M3.800 0v3M2.500 8v5H5" fill="none" stroke="#000" strokeWidth="1.200" /><path d="M6.500 5.500h5v6h-5z" /></svg>
        <svg className="mr-[10px]" width="16" height="16" viewBox="0 0 16 16" fill="none" stroke="#000" strokeWidth="1.300"><path d="M.7 15C1 7 7 1 15 .7M4.500 15C5 9 9 5 15 4.500M8.500 15c.3-3.500 3-6 6.500-6.300" stroke="#333" /><circle cx="14" cy="14" r="1.300" fill="#000" /></svg>
        <svg className="mr-[13px]" width="20" height="16" viewBox="0 0 20 16" fill="none" stroke="#000" strokeWidth="1.200"><path d="M.6 5h3.500L8 1.500v13L4.100 11H.6zM10.500 5.500c1 1.500 1 3.500 0 5M13.500 3c2.300 3 2.300 7 0 10M16.500 1c3.300 4 3.300 10 0 14" /></svg>
        <span className="w-[45px] text-[15px] tracking-[-0.8px]">ENG</span>
        <div className="flex w-[76px] flex-col items-center text-[15px] leading-[23px] tracking-[-0.4px] whitespace-nowrap"><span>22:48</span><span>14-11-2022</span></div>
        <div className="relative ml-[22px] h-[26px] w-[45px]">
          <svg width="21" height="20" viewBox="0 0 21 20"><path d="M0 0h21v16h-8l-4 4v-4H0z" /><path d="M4 4.500h13M4 8h13M4 11.500h9" stroke="#fff" strokeWidth="1.200" /></svg>
          <div className="absolute top-[9px] left-[9px] flex h-[21px] w-[21px] items-center justify-center rounded-full border border-[#777] bg-[#ccd2da] text-[14px]">3</div>
        </div>
        <div className="mr-[5px] h-full w-px bg-[#9aa3ad]" />
      </div>
    </div>
  );
}

export default function App() {
  return (
    <div className={`h-[1080px] w-[1920px] overflow-hidden bg-white ${UI}`}>
      <TabStrip />
      <Toolbar />
      <Bookmarks />
      <SharingBar />
      <Player />
      <Taskbar />
    </div>
  );
}
